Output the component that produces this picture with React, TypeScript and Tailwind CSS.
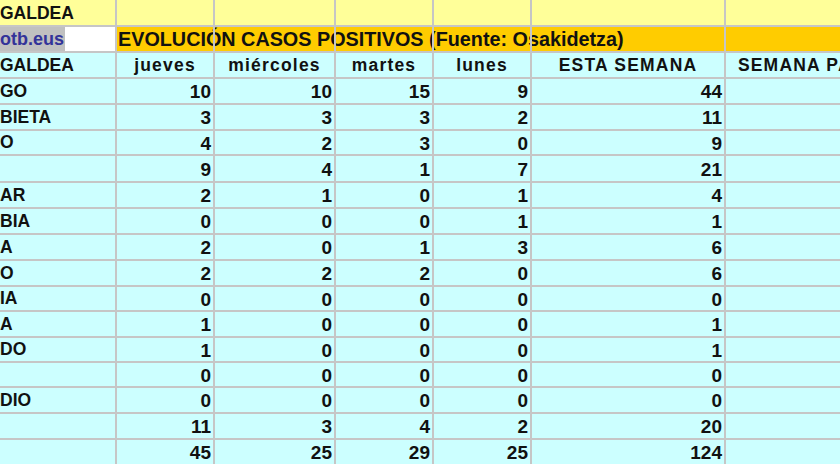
import React from 'react';

const cols = "grid grid-cols-[117px_98px_121px_98px_98px_194px_194px]";
const cell = "border-r-2 border-b-2 border-[#c6c6c6]";

const rows: [string, number[], number][] = [
  ["GO", [10, 10, 15, 9], 44],
  ["BIETA", [3, 3, 3, 2], 11],
  ["O", [4, 2, 3, 0], 9],
  ["", [9, 4, 1, 7], 21],
  ["AR", [2, 1, 0, 1], 4],
  ["BIA", [0, 0, 0, 1], 1],
  ["A", [2, 0, 1, 3], 6],
  ["O", [2, 2, 2, 0], 6],
  ["IA", [0, 0, 0, 0], 0],
  ["A", [1, 0, 0, 0], 1],
  ["DO", [1, 0, 0, 0], 1],
  ["", [0, 0, 0, 0], 0],
  ["DIO", [0, 0, 0, 0], 0],
  ["", [11, 3, 4, 2], 20],
  ["", [45, 25, 29, 25], 124],
];

// row heights (bottom border included), taken from the screenshot
const dataH = [
  "h-[26px]", "h-[26px]", "h-[25px]", "h-[27px]", "h-[26px]",
  "h-[26px]", "h-[26px]", "h-[26px]", "h-[25px]", "h-[26px]",
  "h-[25px]", "h-[25px]", "h-[26px]", "h-[26px]", "h-[26px]",
];

const headers = ["jueves", "miércoles", "martes", "lunes", "ESTA SEMANA", "SEMANA PASADA"];

const Num = ({ v }: { v: number | string }) => (
  <div className={`${cell} flex items-center justify-end pr-[2px] pt-[1px] text-[19px] font-bold leading-none`}>
    {v}
  </div>
);

export default function App() {
  return (
    <div className="w-[840px] h-[464px] overflow-hidden bg-white font-['Liberation_Sans',Arial,sans-serif] text-[#111]">
      <div className="w-[920px]">
        {/* title row */}
        <div className={`${cols} h-[27px] bg-[#ffff99]`}>
          <div className={`${cell} flex items-center pt-[2px] text-[17.5px] font-bold leading-none whitespace-nowrap`}>GALDEA</div>
          <div className={cell} />
          <div className={cell} />
          <div className={cell} />
          <div className={cell} />
          <div className={cell} />
          <div className={cell} />
        </div>

        {/* source row */}
        <div className={`${cols} h-[26px] relative`}>
          <div className={`${cell} bg-white flex items-stretch`}>
            <span className="flex items-center bg-[#c0c0c0] text-[#333399] text-[18px] font-bold leading-none pr-[1px]">
              otb.eus
            </span>
          </div>
          <div className={`${cell} bg-[#ffcc00] flex items-center pl-[1px] pt-[1px] whitespace-nowrap`}>
            <span className="relative text-[19.8px] font-bold leading-none">
              EVOLUCIÓN CASOS POSITIVOS (Fuente: Osakidetza)
            </span>
          </div>
          <div className={`${cell} bg-[#ffcc00]`} />
          <div className={`${cell} bg-[#ffcc00]`} />
          <div className={`${cell} bg-[#ffcc00]`} />
          <div className={`${cell} bg-[#ffcc00]`} />
          <div className={`${cell} bg-[#ffcc00]`} />
          {/* grid lines drawn over the spilled title */}
          <div className={`${cols} absolute inset-0 pointer-events-none`}>
            <div className="border-r-2 border-[#c6c6c6]" />
            <div className="border-r-2 border-[#c6c6c6]" />
            <div className="border-r-2 border-[#c6c6c6]" />
            <div className="border-r-2 border-[#c6c6c6]" />
            <div className="border-r-2 border-[#c6c6c6]" />
            <div className="border-r-2 border-[#c6c6c6]" />
            <div className="border-r-2 border-[#c6c6c6]" />
          </div>
        </div>

        {/* header row */}
        <div className={`${cols} h-[26px] bg-[#ccffff]`}>
          <div className={`${cell} flex items-center pt-[2px] text-[17.5px] font-bold leading-none whitespace-nowrap`}>GALDEA</div>
          {headers.map((h) => (
            <div
              key={h}
              className={`${cell} flex items-center justify-center pt-[2px] text-[17.5px] font-bold tracking-[1.2px] leading-none whitespace-nowrap`}
            >
              {h}
            </div>
          ))}
        </div>

        {rows.map(([name, days, total], i) => (
          <div key={i} className={`${cols} ${dataH[i]} bg-[#ccffff]`}>
            <div className={`${cell} flex items-center pt-[1px] text-[17.5px] font-bold leading-none whitespace-nowrap`}>{name}</div>
            {days.map((d, j) => (
              <Num key={j} v={d} />
            ))}
            <Num v={total} />
            <div className={cell} />
          </div>
        ))}
      </div>
    </div>
  );
}
